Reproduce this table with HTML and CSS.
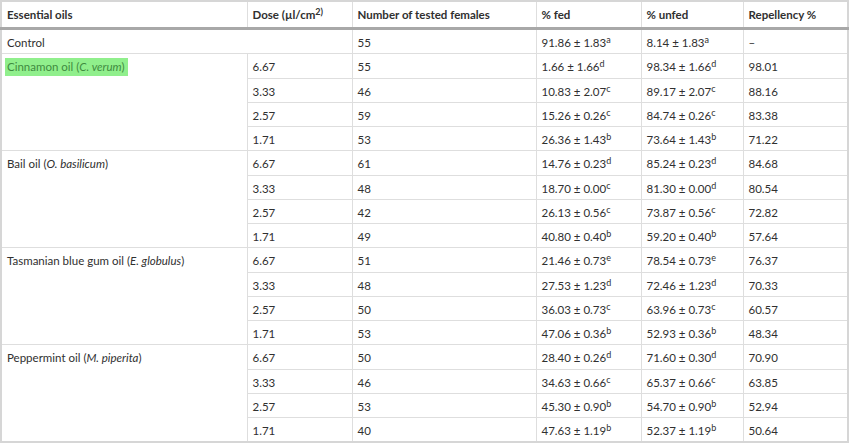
FILE: index.html
```html
<!DOCTYPE html>
<html>
<head>
<meta charset="utf-8">
<link rel="stylesheet" href="styles.css">
</head>
<body>
<table class="data">
  <colgroup>
    <col class="c1"><col class="c2"><col class="c3"><col class="c4"><col class="c5"><col class="c6">
  </colgroup>
  <thead>
    <tr>
      <th>Essential oils</th>
      <th>Dose (µl/cm<sup>2)</sup></th>
      <th>Number of tested females</th>
      <th>% fed</th>
      <th>% unfed</th>
      <th>Repellency %</th>
    </tr>
  </thead>
  <tbody>
    <tr>
      <td colspan="2">Control</td>
      <td>55</td>
      <td>91.86 ± 1.83<sup>a</sup></td>
      <td>8.14 ± 1.83<sup>a</sup></td>
      <td>–</td>
    </tr>
    <tr class="tall">
      <td rowspan="4"><span class="hl">Cinnamon oil (<i>C. verum</i>)</span></td>
      <td>6.67</td><td>55</td>
      <td>1.66 ± 1.66<sup>d</sup></td>
      <td>98.34 ± 1.66<sup>d</sup></td>
      <td>98.01</td>
    </tr>
    <tr>
      <td>3.33</td><td>46</td>
      <td>10.83 ± 2.07<sup>c</sup></td>
      <td>89.17 ± 2.07<sup>c</sup></td>
      <td>88.16</td>
    </tr>
    <tr>
      <td>2.57</td><td>59</td>
      <td>15.26 ± 0.26<sup>c</sup></td>
      <td>84.74 ± 0.26<sup>c</sup></td>
      <td>83.38</td>
    </tr>
    <tr>
      <td>1.71</td><td>53</td>
      <td>26.36 ± 1.43<sup>b</sup></td>
      <td>73.64 ± 1.43<sup>b</sup></td>
      <td>71.22</td>
    </tr>
    <tr class="tall">
      <td rowspan="4">Bail oil (<i>O. basilicum</i>)</td>
      <td>6.67</td><td>61</td>
      <td>14.76 ± 0.23<sup>d</sup></td>
      <td>85.24 ± 0.23<sup>d</sup></td>
      <td>84.68</td>
    </tr>
    <tr>
      <td>3.33</td><td>48</td>
      <td>18.70 ± 0.00<sup>c</sup></td>
      <td>81.30 ± 0.00<sup>d</sup></td>
      <td>80.54</td>
    </tr>
    <tr>
      <td>2.57</td><td>42</td>
      <td>26.13 ± 0.56<sup>c</sup></td>
      <td>73.87 ± 0.56<sup>c</sup></td>
      <td>72.82</td>
    </tr>
    <tr>
      <td>1.71</td><td>49</td>
      <td>40.80 ± 0.40<sup>b</sup></td>
      <td>59.20 ± 0.40<sup>b</sup></td>
      <td>57.64</td>
    </tr>
    <tr class="tall">
      <td rowspan="4">Tasmanian blue gum oil (<i>E. globulus</i>)</td>
      <td>6.67</td><td>51</td>
      <td>21.46 ± 0.73<sup>e</sup></td>
      <td>78.54 ± 0.73<sup>e</sup></td>
      <td>76.37</td>
    </tr>
    <tr>
      <td>3.33</td><td>48</td>
      <td>27.53 ± 1.23<sup>d</sup></td>
      <td>72.46 ± 1.23<sup>d</sup></td>
      <td>70.33</td>
    </tr>
    <tr>
      <td>2.57</td><td>50</td>
      <td>36.03 ± 0.73<sup>c</sup></td>
      <td>63.96 ± 0.73<sup>c</sup></td>
      <td>60.57</td>
    </tr>
    <tr>
      <td>1.71</td><td>53</td>
      <td>47.06 ± 0.36<sup>b</sup></td>
      <td>52.93 ± 0.36<sup>b</sup></td>
      <td>48.34</td>
    </tr>
    <tr class="tall">
      <td rowspan="4">Peppermint oil (<i>M. piperita</i>)</td>
      <td>6.67</td><td>50</td>
      <td>28.40 ± 0.26<sup>d</sup></td>
      <td>71.60 ± 0.30<sup>d</sup></td>
      <td>70.90</td>
    </tr>
    <tr>
      <td>3.33</td><td>46</td>
      <td>34.63 ± 0.66<sup>c</sup></td>
      <td>65.37 ± 0.66<sup>c</sup></td>
      <td>63.85</td>
    </tr>
    <tr>
      <td>2.57</td><td>53</td>
      <td>45.30 ± 0.90<sup>b</sup></td>
      <td>54.70 ± 0.90<sup>b</sup></td>
      <td>52.94</td>
    </tr>
    <tr>
      <td>1.71</td><td>40</td>
      <td>47.63 ± 1.19<sup>b</sup></td>
      <td>52.37 ± 1.19<sup>b</sup></td>
      <td>50.64</td>
    </tr>
  </tbody>
</table>
</body>
</html>
```
FILE: styles.css
```css
html, body {
  margin: 0;
  padding: 0;
  background: #ffffff;
}
body {
  font-family: Lato, "Open Sans", sans-serif;
  font-size: 11.5px;
  color: #303030;
}
.data {
  width: 847px;
  border-collapse: collapse;
  table-layout: fixed;
  border: 2px solid #d6d6d6;
}
.c1 { width: 246px; }
.c2 { width: 105px; }
.c3 { width: 184px; }
.c4 { width: 105px; }
.c5 { width: 102px; }
.c6 { width: 105px; }
.data th,
.data td {
  border: 1px solid #dedede;
  padding: 4px 5px;
  text-align: left;
  vertical-align: top;
  line-height: 15px;
  white-space: nowrap;
}
.data th {
  font-weight: 700;
  font-size: 11.5px;
  height: 16px;
  padding-top: 5px;
  border-bottom: 3px solid #a8a8a8;
}
.data td {
  height: 15px;
  padding-top: 5px;
  padding-bottom: 3px;
}
.data .tall td {
  height: 16px;
}
.data sup {
  font-size: 9px;
  line-height: 0;
  vertical-align: 4px;
}
.hl {
  background: #90ef8c;
  color: #3f8b3f;
  padding: 2px 3px 3px 2px;
  margin-left: -2px;
}
```
